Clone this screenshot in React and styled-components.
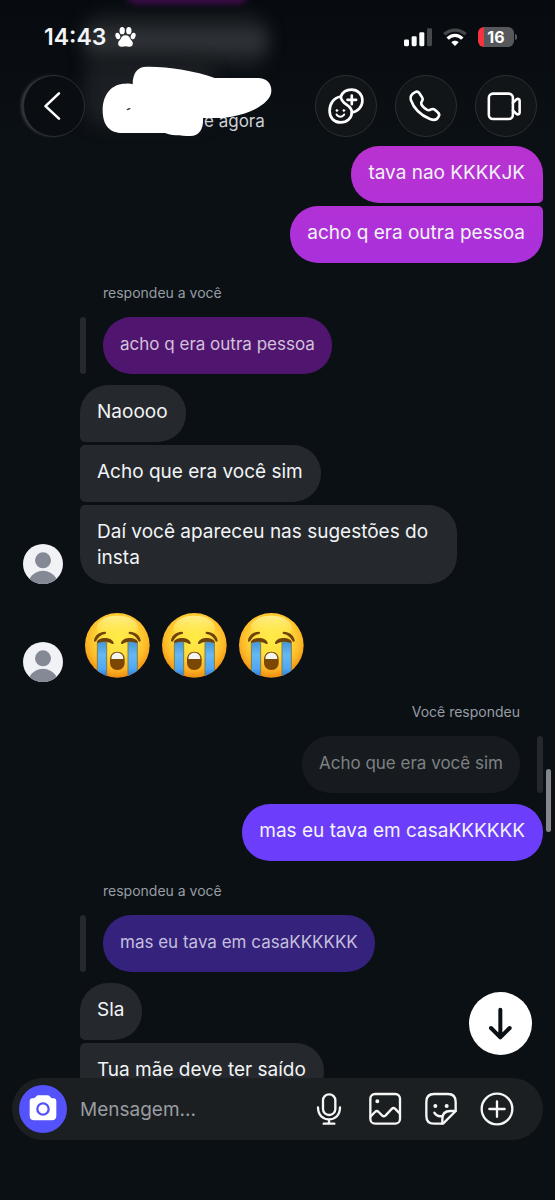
import * as React from "react";
import styled, { createGlobalStyle, css } from "styled-components";

const GlobalStyle = createGlobalStyle`
  *, *::before, *::after {
    box-sizing: border-box;
  }

  body {
    margin: 0;
    background: #0b1014;
    color: #f2f4f6;
    font-family: Inter, "Liberation Sans", sans-serif;
  }

  button, input {
    font: inherit;
    color: inherit;
  }
`;

const TONES = {
  grey: "#25292d",
  dim: "#171b1f",
  magenta: "linear-gradient(#b932d1, #b231d6)",
  orchid: "linear-gradient(#b131d5, #aa30dc)",
  plum: "#50166f",
  violet: "#6c3dfb",
  indigo: "#34227c",
};

const Screen = styled.div`
  display: flex;
  flex-direction: column;
  height: 100vh;
  overflow: hidden;
`;

/* Header */

const Header = styled.header`
  position: relative;
  flex: none;
  padding: 26px 18px 9px 23px;
  overflow: hidden;
  background: linear-gradient(#070b10, #0b1014);
`;

const Ghost = styled.div`
  position: absolute;
  top: 14px;
  left: 84px;
  width: 184px;
  height: 54px;
  border-radius: 20px;
  background: linear-gradient(#1b1e22 20%, #36393d 50%, #1b1e22 80%);
  filter: blur(8px);
`;

const GhostTail = styled(Ghost)`
  top: 60px;
  width: 130px;
  height: 66px;
  background: #1b1e22;
`;

const GhostSent = styled(Ghost)`
  top: -16px;
  left: 126px;
  width: 122px;
  height: 20px;
  background: #3f0d4b;
  filter: blur(3px);
`;

const StatusBar = styled.div`
  position: relative;
  display: flex;
  align-items: center;
  height: 22px;
  padding: 0 21px;
`;

const Clock = styled.time`
  margin-right: 9px;
  font-size: 23px;
  font-weight: 600;
  line-height: 22px;
`;

const StatusIcons = styled.div`
  display: flex;
  align-items: center;
  gap: 11px;
  margin-left: auto;
`;

const Battery = styled.div`
  position: relative;
  width: 36px;
  height: 20px;
  margin-right: 2px;
  border-radius: 6px;
  background: linear-gradient(90deg, #f5333f 6px, #56585c 6px);
  color: #fff;
  font-size: 16px;
  font-weight: 700;
  line-height: 20px;
  text-align: center;

  &::after {
    content: "";
    position: absolute;
    top: 7px;
    right: -3px;
    width: 2px;
    height: 6px;
    border-radius: 0 2px 2px 0;
    background: #56585c;
  }
`;

const Toolbar = styled.div`
  position: relative;
  display: flex;
  align-items: center;
  gap: 18px;
  margin-top: 27px;
`;

const RoundButton = styled.button`
  flex: none;
  width: 62px;
  height: 62px;
  padding: 0;
  border: 1px solid #2b2e34;
  border-radius: 50%;
  background: #111518;
  color: #fff;

  svg {
    display: block;
    width: 60px;
    height: 60px;
  }
`;

const BackButton = styled(RoundButton)`
  background: #0a0e13;
  box-shadow: -3px 0 3px -1px #3c4046;
`;

const Contact = styled.div`
  position: relative;
  flex: 1;
  height: 62px;
`;

const Presence = styled.p`
  margin: 0;
  padding: 35px 0 0 101px;
  color: #cfd2d6;
  font-size: 17px;
  line-height: 22px;
  white-space: nowrap;
`;

const Scribble = styled.svg`
  position: absolute;
  top: -9px;
  left: -1px;
  width: 170px;
  height: 71px;
`;

/* Conversation */

const Thread = styled.main`
  position: relative;
  flex: 1;
  min-height: 0;
  overflow: hidden;
`;

const Messages = styled.div`
  display: flex;
  flex-direction: column;
  gap: 3px;
  padding: 0 12px 0 23px;
`;

const Row = styled.div`
  display: flex;
  flex: none;
  align-items: flex-end;
  gap: 17px;
  justify-content: ${(p) => (p.$sent ? "flex-end" : "flex-start")};
  padding-left: ${(p) => (p.$sent || p.$avatar ? "0" : "57px")};
  margin-top: ${(p) => p.$space || 0}px;
`;

const tight = css`
  ${(p) => p.$tight === "bottom-right" && "border-bottom-right-radius: 5px;"}
  ${(p) => p.$tight === "top-right" && "border-top-right-radius: 5px;"}
  ${(p) => p.$tight === "bottom-left" && "border-bottom-left-radius: 5px;"}
  ${(p) => p.$tight === "top-left" && "border-top-left-radius: 5px;"}
  ${(p) => p.$tight === "left" && "border-top-left-radius: 5px; border-bottom-left-radius: 5px;"}
`;

const Bubble = styled.p`
  max-width: 377px;
  min-height: 57px;
  margin: 0;
  padding: 14px 18px 13px 17px;
  border-radius: 28px;
  background: ${(p) => TONES[p.$tone]};
  font-size: 19px;
  line-height: 26px;
  ${tight}
`;

const Quote = styled.blockquote`
  min-height: 57px;
  margin: 0;
  padding: 15px 17px;
  border-radius: 28px;
  background: ${(p) => TONES[p.$tone]};
  color: ${(p) => p.$color};
  font-size: 17px;
  line-height: 25px;
`;

const QuoteBar = styled.span`
  width: 6px;
  height: 57px;
  border-radius: 3px;
  background: #25292d;
`;

const Caption = styled.p`
  margin: 17px 23px 11px 80px;
  color: #989da4;
  font-size: 14px;
  line-height: 20px;
  text-align: ${(p) => (p.$sent ? "right" : "left")};
`;

const Avatar = styled.svg`
  flex: none;
  width: 40px;
  height: 40px;
`;

const EmojiGroup = styled.div`
  display: flex;
  gap: 12px;
  padding: 0 0 4px 5px;

  svg {
    width: 65px;
    height: 65px;
  }
`;

const ScrollThumb = styled.div`
  position: absolute;
  top: 623px;
  right: 4px;
  width: 5px;
  height: 63px;
  border-radius: 3px;
  background: #85888b;
`;

const JumpButton = styled.button`
  position: absolute;
  right: 23px;
  bottom: 23px;
  width: 63px;
  height: 63px;
  padding: 0;
  border: 0;
  border-radius: 50%;
  background: #fff;
  color: #0b1014;

  svg {
    display: block;
    width: 63px;
    height: 63px;
  }
`;

/* Composer */

const Composer = styled.form`
  display: flex;
  flex: none;
  align-items: center;
  height: 62px;
  margin: 0 12px 60px;
  padding: 0 28px 0 7px;
  border-radius: 31px;
  background: #1c1f21;
`;

const CameraButton = styled.button`
  flex: none;
  width: 48px;
  height: 48px;
  padding: 0;
  border: 0;
  border-radius: 50%;
  background: #5452fb;
  color: #fff;

  svg {
    display: block;
    width: 48px;
    height: 48px;
  }
`;

const MessageInput = styled.input`
  flex: 1;
  min-width: 0;
  margin-left: 13px;
  padding: 0;
  border: 0;
  outline: 0;
  background: transparent;
  font-size: 19px;

  &::placeholder {
    color: #989ca1;
    opacity: 1;
  }
`;

const Tools = styled.div`
  display: flex;
  gap: 20px;
`;

const ToolButton = styled.button`
  width: 36px;
  height: 36px;
  padding: 0;
  border: 0;
  background: none;
  color: #f5f6f6;

  svg {
    display: block;
    width: 36px;
    height: 36px;
  }
`;

const line = {
  fill: "none",
  stroke: "currentColor",
  strokeLinecap: "round",
  strokeLinejoin: "round",
  "aria-hidden": true,
};

const PawIcon = () => (
  <svg width="21" height="20" viewBox="0 0 62 60" fill="#fff" aria-hidden="true">
    <ellipse cx="21" cy="11" rx="8" ry="11" />
    <ellipse cx="41" cy="11" rx="8" ry="11" />
    <ellipse cx="8" cy="27" rx="7" ry="10" transform="rotate(-18 8 27)" />
    <ellipse cx="54" cy="27" rx="7" ry="10" transform="rotate(18 54 27)" />
    <path d="M31 25c9 0 13 6 15 12 3 4 8 7 7 14-1 7-6 9-12 8-7-2-13-2-20 0-6 1-11-1-12-8-1-7 4-10 7-14 2-6 6-12 15-12z" />
  </svg>
);

const SignalIcon = () => (
  <svg width="28" height="19" viewBox="0 0 84 56" fill="#fff" aria-hidden="true">
    <rect x="0" y="34" width="15" height="20" rx="4" />
    <rect x="23" y="24" width="15" height="30" rx="4" />
    <rect x="46" y="12" width="15" height="42" rx="4" />
    <rect x="69" y="0" width="15" height="54" rx="4" fill="#45484b" />
  </svg>
);

const WifiIcon = () => (
  <svg width="24" height="18" viewBox="0 0 72 54" fill="none" strokeWidth="10" aria-hidden="true">
    <path d="M4 19C22 2 50 2 68 19" stroke="#45484b" />
    <path d="M14 32c12-13 32-13 44 0" stroke="#fff" />
    <path d="M25 43c6-6 16-6 22 0L36 54z" fill="#fff" />
  </svg>
);

const BackIcon = () => (
  <svg viewBox="0 0 187 187" strokeWidth="8" {...line}>
    <path d="M109 54 67 94l42 39" />
  </svg>
);

const StickerPlusIcon = () => (
  <svg viewBox="3 3 181 181" strokeWidth="8" {...line}>
    <path d="M78 65C83 51 95 44 110 44c19 0 33 14 33 33 0 18-13 34-32 36" />
    <path d="M78 65C57 68 44 86 44 108c0 21 13 35 33 35s34-13 34-31c0-24-33-21-33-47z" />
    <path d="M111 62v26M98 75h26" />
    <path d="M65 119c4 9 19 9 23 0" strokeWidth="6" />
    <circle cx="66" cy="107" r="3" fill="currentColor" strokeWidth="2" />
    <circle cx="87" cy="107" r="3" fill="currentColor" strokeWidth="2" />
  </svg>
);

const PhoneIcon = () => (
  <svg viewBox="0 0 187 187" strokeWidth="8" {...line}>
    <path d="M60 50c5-3 9-2 13 4l9 14c3 5 1 8-2 12-3 5-2 8 2 13 5 6 9 9 14 12 6 3 9 2 13-1 4-2 8-2 12 1l9 8c6 5 6 10 2 15-5 9-14 11-26 6-30-12-51-34-60-60-3-11 4-19 14-24z" />
  </svg>
);

const VideoIcon = () => (
  <svg viewBox="0 0 187 187" strokeWidth="8" {...line}>
    <rect x="40" y="55" width="75" height="79" rx="13" />
    <path d="M115 84l11-11c4-3 10-2 10 4v37c0 6-6 7-10 4l-11-11" />
  </svg>
);

const ArrowDownIcon = () => (
  <svg viewBox="0 0 189 189" strokeWidth="12" {...line}>
    <path d="M94 53v82M66 108l28 28 28-28" />
  </svg>
);

const CameraIcon = () => (
  <svg viewBox="0 0 144 144" aria-hidden="true">
    <path
      fill="currentColor"
      d="M57 31h30c6 0 7 8 13 9h4c5 0 8 4 8 9v43c0 9-5 14-14 14H46c-9 0-14-5-14-14V49c0-5 3-9 8-9h4c6-1 7-9 13-9z"
    />
    <circle cx="72" cy="72" r="17" fill="none" stroke="#5452fb" strokeWidth="7" />
  </svg>
);

const MicIcon = () => (
  <svg viewBox="0 0 108 108" strokeWidth="7" {...line}>
    <rect x="36" y="10" width="37" height="62" rx="18" />
    <path d="M21 49c0 23 14 36 33 36s33-13 33-36M54 85v12M38 98h32" />
  </svg>
);

const ImageIcon = () => (
  <svg viewBox="0 0 108 108" strokeWidth="7" {...line}>
    <rect x="10" y="9" width="89" height="89" rx="14" />
    <circle cx="31" cy="31" r="4" fill="currentColor" strokeWidth="4" />
    <path d="M11 76l13-13c4-4 7-4 11 0l10 10c4 4 7 4 11 0l19-20c3-3 6-3 9 0l14 14" />
  </svg>
);

const StickerIcon = () => (
  <svg viewBox="0 0 108 108" strokeWidth="7" {...line}>
    <path d="M58 98H33C17 98 10 90 10 74V33C10 17 17 9 33 9h42c16 0 23 8 23 24v27L61 97z" />
    <path d="M58 97V84c0-16 8-24 24-24h16M34 65c5 9 14 12 24 10" />
    <circle cx="37" cy="45" r="4" fill="currentColor" strokeWidth="4" />
    <circle cx="71" cy="45" r="4" fill="currentColor" strokeWidth="4" />
  </svg>
);

const PlusIcon = () => (
  <svg viewBox="0 0 108 108" strokeWidth="7" {...line}>
    <circle cx="54" cy="54" r="46" />
    <path d="M54 31v46M31 54h46" />
  </svg>
);

const Person = () => (
  <Avatar viewBox="0 0 120 120" role="img" aria-label="Avatar">
    <circle cx="60" cy="60" r="60" fill="#f0f2f5" />
    <circle cx="60" cy="49" r="24" fill="#858995" />
    <path d="M19 104c20-32 62-32 82 0a60 60 0 0 1-82 0z" fill="#858995" />
  </Avatar>
);

const CryingFace = ({ id }) => (
  <svg viewBox="0 0 195 195" role="img" aria-label="Rosto chorando alto">
    <defs>
      <radialGradient id={`${id}-skin`} cx="0.5" cy="0.4" r="0.62">
        <stop offset="0" stopColor="#ffec45" />
        <stop offset="0.45" stopColor="#ffdc3c" />
        <stop offset="0.75" stopColor="#fdb827" />
        <stop offset="1" stopColor="#ee860e" />
      </radialGradient>
      <linearGradient id={`${id}-shine`} x1="0" y1="0" x2="0" y2="1">
        <stop offset="0" stopColor="#fff6a0" stopOpacity="0.8" />
        <stop offset="1" stopColor="#fff04e" stopOpacity="0" />
      </linearGradient>
      <linearGradient id={`${id}-tear`} x1="0" y1="0" x2="0" y2="1">
        <stop offset="0" stopColor="#4796d8" />
        <stop offset="0.35" stopColor="#66b8f5" />
        <stop offset="0.7" stopColor="#50a8f2" />
        <stop offset="1" stopColor="#1c68d8" />
      </linearGradient>
      <clipPath id={`${id}-clip`}>
        <circle cx="97" cy="97" r="97" />
      </clipPath>
    </defs>
    <circle cx="97" cy="97" r="97" fill={`url(#${id}-skin)`} />
    <ellipse cx="97" cy="44" rx="62" ry="36" fill={`url(#${id}-shine)`} />
    <g clipPath={`url(#${id}-clip)`} fill={`url(#${id}-tear)`} stroke="#7d7f4e" strokeWidth="3">
      <path d="M37 86h28v115H37zM129 86h28v115h-28z" />
    </g>
    <g fill="#70430a">
      <path d="M36 86c6-14 42-16 50 3 1 4-3 5-6 3-12-7-28-7-38-3-4 1-7 0-6-3zM158 86c-6-14-42-16-50 3-1 4 3 5 6 3 12-7 28-7 38-3 4 1 7 0 6-3z" />
      <path d="M27 82c2-14 16-26 33-26 5 1 4 6 0 7-12 2-20 9-26 20-3 5-8 3-7-1zM167 82c-2-14-16-26-33-26-5 1-4 6 0 7 12 2 20 9 26 20 3 5 8 3 7-1z" />
    </g>
    <path d="M97 116c14 0 22 10 22 23v9c0 14-8 23-22 23s-22-9-22-23v-9c0-13 8-23 22-23z" fill="#7c4604" />
    <path d="M97 119c11 0 18 7 18 19H79c0-12 7-19 18-19z" fill="#f4f4f0" />
  </svg>
);

const Received = ({ tight: corner, space, children }) => (
  <Row $space={space}>
    <Bubble $tone="grey" $tight={corner}>{children}</Bubble>
  </Row>
);

const Sent = ({ tone, tight: corner, space, children }) => (
  <Row $sent $space={space}>
    <Bubble $tone={tone} $tight={corner}>{children}</Bubble>
  </Row>
);

export default function App() {
  const [draft, setDraft] = React.useState("");

  return (
    <Screen>
      <GlobalStyle />
      <Header>
        <Ghost />
        <GhostTail />
        <GhostSent />
        <StatusBar>
          <Clock>14:43</Clock>
          <PawIcon />
          <StatusIcons>
            <SignalIcon />
            <WifiIcon />
            <Battery>16</Battery>
          </StatusIcons>
        </StatusBar>
        <Toolbar>
          <BackButton type="button" aria-label="Voltar"><BackIcon /></BackButton>
          <Contact>
            <Presence>e agora</Presence>
            <Scribble viewBox="0 0 510 213" fill="#fff" aria-hidden="true">
              <path d="M92 55C92 25 103 2 135 2c60-1 145 12 203 34h130c26 0 41 16 40 40-1 32-54 66-120 76-28 5-58 4-85 4 2 28-8 54-38 54-30 0-60-2-76-9H62C24 201 2 180 2 132 2 84 30 53 70 53c8-1 16-1 22 2z" />
              <path d="M73 132c3-5 7-7 13-6l-2 4c-4 2-7 3-11 2z" fill="#33373c" />
            </Scribble>
          </Contact>
          <RoundButton type="button" aria-label="Figurinhas"><StickerPlusIcon /></RoundButton>
          <RoundButton type="button" aria-label="Ligar"><PhoneIcon /></RoundButton>
          <RoundButton type="button" aria-label="Chamada de vídeo"><VideoIcon /></RoundButton>
        </Toolbar>
      </Header>

      <Thread>
        <Messages>
          <Sent tone="magenta" tight="bottom-right">tava nao KKKKJK</Sent>
          <Sent tone="orchid" tight="top-right">acho q era outra pessoa</Sent>

          <Caption>respondeu a você</Caption>
          <Row>
            <QuoteBar />
            <Quote $tone="plum" $color="#d3c2dc">acho q era outra pessoa</Quote>
          </Row>
          <Received tight="bottom-left" space={8}>Naoooo</Received>
          <Received tight="left">Acho que era você sim</Received>
          <Row $avatar>
            <Person />
            <Bubble $tone="grey" $tight="top-left">Daí você apareceu nas sugestões do insta</Bubble>
          </Row>

          <Row $avatar $space={26}>
            <Person />
            <EmojiGroup>
              <CryingFace id="cry-a" />
              <CryingFace id="cry-b" />
              <CryingFace id="cry-c" />
            </EmojiGroup>
          </Row>

          <Caption $sent>Você respondeu</Caption>
          <Row $sent>
            <Quote $tone="dim" $color="#7d8184">Acho que era você sim</Quote>
            <QuoteBar />
          </Row>
          <Sent tone="violet" space={8}>mas eu tava em casaKKKKKK</Sent>

          <Caption>respondeu a você</Caption>
          <Row>
            <QuoteBar />
            <Quote $tone="indigo" $color="#c4bfdc">mas eu tava em casaKKKKKK</Quote>
          </Row>
          <Received tight="bottom-left" space={8}>Sla</Received>
          <Received tight="left">Tua mãe deve ter saído</Received>
        </Messages>
        <ScrollThumb />
        <JumpButton type="button" aria-label="Ir para o fim"><ArrowDownIcon /></JumpButton>
      </Thread>

      <Composer onSubmit={(e) => e.preventDefault()}>
        <CameraButton type="button" aria-label="Câmera"><CameraIcon /></CameraButton>
        <MessageInput
          aria-label="Mensagem"
          placeholder="Mensagem..."
          value={draft}
          onChange={(e) => setDraft(e.target.value)}
        />
        <Tools>
          <ToolButton type="button" aria-label="Gravar áudio"><MicIcon /></ToolButton>
          <ToolButton type="button" aria-label="Enviar foto"><ImageIcon /></ToolButton>
          <ToolButton type="button" aria-label="Figurinhas"><StickerIcon /></ToolButton>
          <ToolButton type="button" aria-label="Mais opções"><PlusIcon /></ToolButton>
        </Tools>
      </Composer>
    </Screen>
  );
}
